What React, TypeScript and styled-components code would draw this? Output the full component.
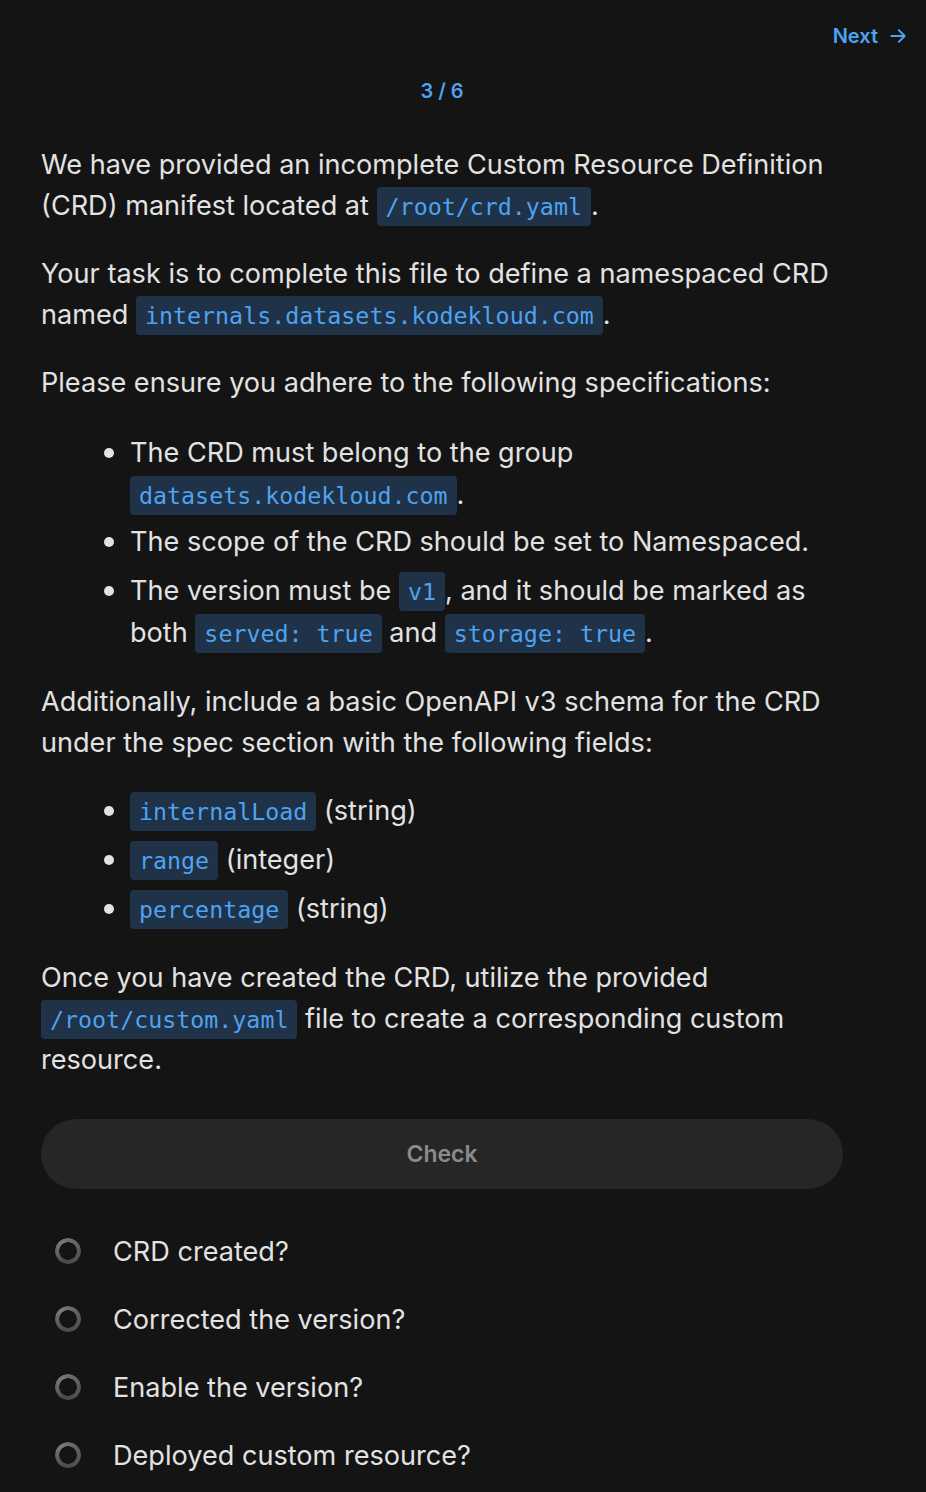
import React from "react";
import styled, { createGlobalStyle } from "styled-components";

const Global = createGlobalStyle`
  html, body { margin: 0; padding: 0; background: #141414; }
  body { font-family: Inter, "Noto Sans", sans-serif; color: #e2e2e2; }
`;

const Page = styled.div`
  width: 926px;
  min-height: 1492px;
  background: #141414;
  box-sizing: border-box;
  padding: 22px 18px 0 41px;
`;

const TopBar = styled.div`
  display: flex;
  justify-content: flex-end;
`;

const NextLink = styled.a`
  display: flex;
  align-items: center;
  gap: 10px;
  color: #4ea3f1;
  font-size: 20px;
  font-weight: 600;
  text-decoration: none;
  line-height: 28px;
`;

const Content = styled.div`
  width: 802px;
`;

const Counter = styled.div`
  text-align: center;
  color: #4ea3f1;
  font-size: 20px;
  font-weight: 600;
  line-height: 28px;
  margin-top: 27px;
  margin-bottom: 39px;
`;

const P = styled.p<{ $mb?: number }>`
  font-size: 27.1px;
  line-height: 41px;
  margin: 0 0 ${(p) => p.$mb ?? 27}px;
`;

const Code = styled.code`
  font-family: "DejaVu Sans Mono", monospace;
  font-size: 23.3px;
  line-height: 1;
  color: #4ea3f1;
  background: #1f3247;
  border-radius: 4px;
  padding: 6px 9px 6px;
`;

const List = styled.ul`
  margin: 0 0 27px;
  padding-left: 89px;
  font-size: 27.1px;
  line-height: 42px;
`;

const Item = styled.li<{ $gap?: number }>`
  margin-bottom: ${(p) => p.$gap ?? 4}px;
  &::marker { font-size: 30px; }
`;

const CheckButton = styled.button`
  display: block;
  width: 802px;
  height: 70px;
  border: none;
  border-radius: 35px;
  background: #262626;
  color: #8a8a8a;
  font-family: Inter, "Noto Sans", sans-serif;
  font-size: 23px;
  font-weight: 600;
  margin-top: 39px;
`;

const Checklist = styled.div`
  display: flex;
  flex-direction: column;
  gap: 28px;
  margin-top: 42px;
`;

const CheckRow = styled.div`
  display: flex;
  align-items: center;
  height: 40px;
  font-size: 27.1px;
  color: #e2e2e2;
`;

const Ring = styled.span`
  width: 26px;
  height: 26px;
  box-sizing: border-box;
  border-radius: 50%;
  margin-left: 14px;
  margin-right: 32px;
  background: conic-gradient(from 200deg, #4a4a4a, #7a7a7a, #5a5a5a, #4a4a4a);
  -webkit-mask: radial-gradient(circle, transparent 8.5px, #000 9px);
  mask: radial-gradient(circle, transparent 8.5px, #000 9px);
`;

const checks = [
  "CRD created?",
  "Corrected the version?",
  "Enable the version?",
  "Deployed custom resource?",
];

export default function App() {
  return (
    <Page>
      <Global />
      <TopBar>
        <NextLink>
          Next
          <svg width="20" height="20" viewBox="0 0 24 24" fill="none" stroke="#4ea3f1" strokeWidth="2.4" strokeLinecap="round" strokeLinejoin="round">
            <path d="M4 12h16M13 5l7 7-7 7" />
          </svg>
        </NextLink>
      </TopBar>
      <Content>
        <Counter>3 / 6</Counter>
        <P>
          We have provided an incomplete Custom Resource Definition (CRD) manifest located at{" "}
          <Code>/root/crd.yaml</Code>.
        </P>
        <P>
          Your task is to complete this file to define a namespaced CRD named{" "}
          <Code>internals.datasets.kodekloud.com</Code>.
        </P>
        <P>Please ensure you adhere to the following specifications:</P>
        <List>
          <Item $gap={3}>
            The CRD must belong to the group <Code>datasets.kodekloud.com</Code>.
          </Item>
          <Item $gap={5}>The scope of the CRD should be set to Namespaced.</Item>
          <Item>
            The version must be <Code>v1</Code>, and it should be marked as both{" "}
            <Code>served: true</Code> and <Code>storage: true</Code>.
          </Item>
        </List>
        <P $mb={25}>
          Additionally, include a basic OpenAPI v3 schema for the CRD under the spec section with the following fields:
        </P>
        <List>
          <Item $gap={5}>
            <Code>internalLoad</Code> (string)
          </Item>
          <Item $gap={5}>
            <Code>range</Code> (integer)
          </Item>
          <Item $gap={5}>
            <Code>percentage</Code> (string)
          </Item>
        </List>
        <P>
          Once you have created the CRD, utilize the provided <Code>/root/custom.yaml</Code> file to create a
          corresponding custom resource.
        </P>
        <CheckButton>Check</CheckButton>
        <Checklist>
          {checks.map((c) => (
            <CheckRow key={c}>
              <Ring />
              {c}
            </CheckRow>
          ))}
        </Checklist>
      </Content>
    </Page>
  );
}
